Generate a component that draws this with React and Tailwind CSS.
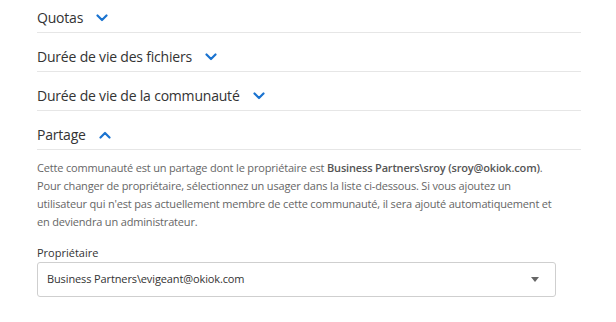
const sections = [
  { title: 'Quotas', open: false },
  { title: 'Durée de vie des fichiers', open: false },
  { title: 'Durée de vie de la communauté', open: false },
  { title: 'Partage', open: true },
];

const Chevron = ({ up }) => (
  <svg width="12" height="8" viewBox="0 0 12 8" className="ml-[13px] shrink-0">
    <path
      d={up ? 'M1.5 6.5 L6 2 L10.5 6.5' : 'M1.5 1.5 L6 6 L10.5 1.5'}
      fill="none"
      stroke="#1a73d0"
      strokeWidth="2.2"
      strokeLinecap="round"
      strokeLinejoin="round"
    />
  </svg>
);

export default function App() {
  return (
    <div className="w-[616px] h-[322px] bg-white overflow-hidden font-['Open_Sans','Liberation_Sans',sans-serif]">
      <div className="pl-[37px] w-[581px]">
        {sections.map((s, i) => (
          <div
            key={s.title}
            className={`flex items-center border-b border-[#e6e6e6] pb-[4px] ${i === 0 ? 'pt-[8px]' : 'pt-[14px]'}`}
          >
            <span className="text-[14px] leading-[20px] tracking-[-0.2px] font-medium text-[#333]">{s.title}</span>
            <Chevron up={s.open} />
          </div>
        ))}

        <div className="mt-[9px] text-[11px] leading-[18px] tracking-[-0.17px] text-[#666] whitespace-nowrap">
          <p>
            Cette communauté est un partage dont le propriétaire est{' '}
            <b className="font-semibold text-[#555]">Business Partners\sroy (sroy@okiok.com)</b>.
          </p>
          <p>Pour changer de propriétaire, sélectionnez un usager dans la liste ci-dessous. Si vous ajoutez un</p>
          <p>utilisateur qui n'est pas actuellement membre de cette communauté, il sera ajouté automatiquement et</p>
          <p>en deviendra un administrateur.</p>
        </div>

        <div className="mt-[14px] w-[519px]">
          <label className="block text-[11px] leading-[16px] text-[#333] mb-[1px]">Propriétaire</label>
          <div className="flex items-center justify-between h-[35px] border border-[#cfcfcf] rounded-[3px] pl-[9px] pr-[16px]">
            <span className="text-[11px] tracking-[-0.12px] text-[#333]">Business Partners\evigeant@okiok.com</span>
            <span className="w-0 h-0 border-l-[4.5px] border-r-[4.5px] border-t-[5px] border-l-transparent border-r-transparent border-t-[#666]" />
          </div>
        </div>
      </div>
    </div>
  );
}
